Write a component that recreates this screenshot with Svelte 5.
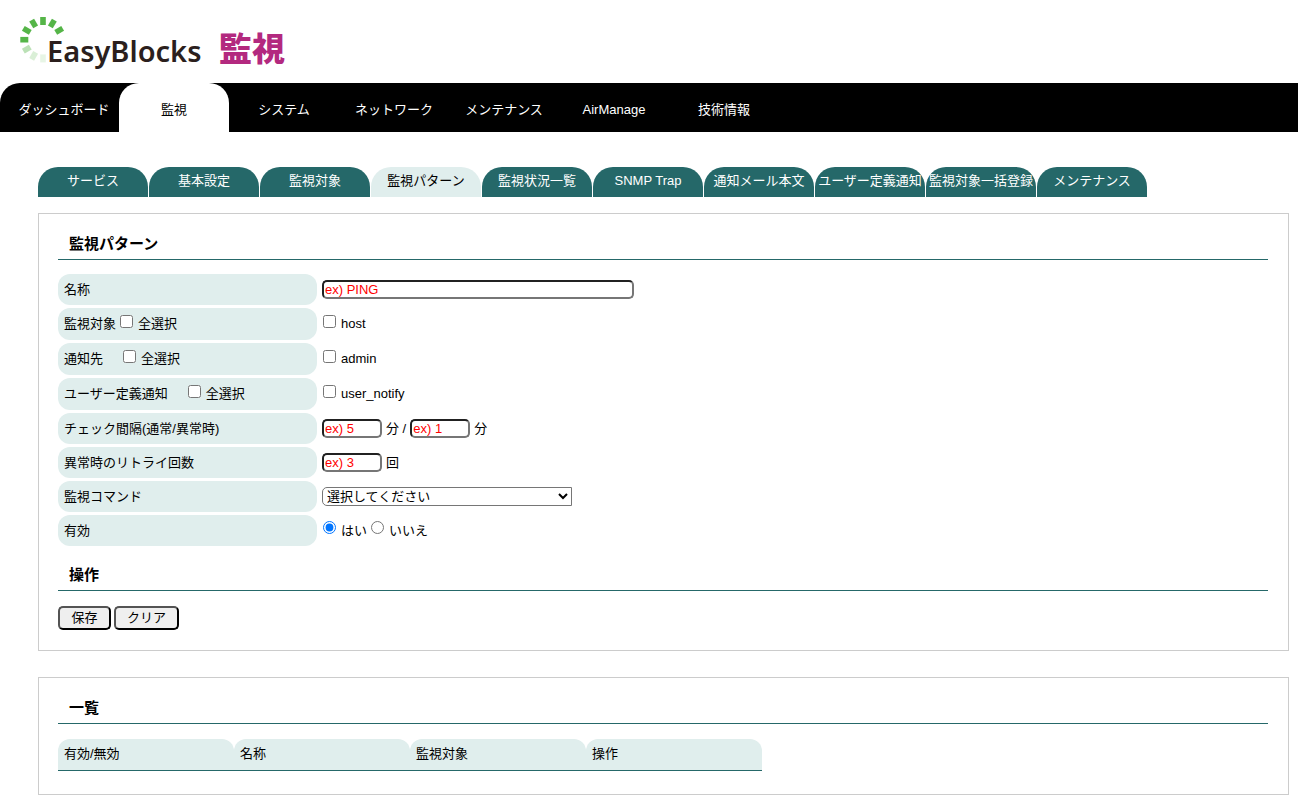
<script>
    const menu = ["ダッシュボード", "監視", "システム", "ネットワーク", "メンテナンス", "AirManage", "技術情報"];
    const tabs = [
        "サービス",
        "基本設定",
        "監視対象",
        "監視パターン",
        "監視状況一覧",
        "SNMP Trap",
        "通知メール本文",
        "ユーザー定義通知",
        "監視対象一括登録",
        "メンテナンス",
    ];
    const choices = [
        { id: "target", title: "監視対象", item: "host" },
        { id: "notice", title: "通知先", item: "admin", spaced: true },
        { id: "user", title: "ユーザー定義通知", item: "user_notify", spaced: true },
    ];
    const columns = ["有効/無効", "名称", "監視対象", "操作"];

    // logo ring: twelve steps to the circle, the last ones fade out
    const blocks = [
        { step: 2, opacity: 1 },
        { step: 1, opacity: 1 },
        { step: 0, opacity: 1 },
        { step: -1, opacity: 1 },
        { step: -2, opacity: 1 },
        { step: -3, opacity: 1 },
        { step: -4, opacity: 0.4 },
        { step: -5, opacity: 0.22 },
        { step: -6, opacity: 0.14 },
    ];

    let activeMenu = "監視";
    let activeTab = "監視パターン";
    let enabled = "yes";
</script>

<header>
    <svg class="logo" width="300" height="83" viewBox="0 0 300 83" role="img" aria-label="EasyBlocks 監視">
        {#each blocks as { step, opacity }}
            <rect x="40.2" y="17" width="5.6" height="8" fill="#55b548" {opacity} transform="rotate({step * 30} 43 39.7)" />
        {/each}
        <text class="brand" x="47" y="62">EasyBlocks</text>
        <text class="product" x="219" y="61">監視</text>
    </svg>
    <nav class="menu">
        {#each menu as name}
            <a href="#menu" class:active={name === activeMenu} on:click|preventDefault={() => (activeMenu = name)}>{name}</a>
        {/each}
    </nav>
</header>

<main>
    <nav class="tabs">
        {#each tabs as name}
            <a href="#tab" class:active={name === activeTab} on:click|preventDefault={() => (activeTab = name)}>{name}</a>
        {/each}
    </nav>

    <form class="panel" on:submit|preventDefault>
        <h3>監視パターン</h3>
        <div class="rows">
            <div class="row">
                <div class="title"><label for="name">名称</label></div>
                <div class="field"><input id="name" class="long" type="text" placeholder="ex) PING" /></div>
            </div>
            {#each choices as { id, title, item, spaced }}
                <div class="row choice">
                    <div class="title">
                        <span class:spaced>{title}</span>
                        <input id="{id}-all" type="checkbox" /><label for="{id}-all">全選択</label>
                    </div>
                    <div class="field"><input id="{id}-item" type="checkbox" /><label for="{id}-item">{item}</label></div>
                </div>
            {/each}
            <div class="row">
                <div class="title"><label for="interval">チェック間隔(通常/異常時)</label></div>
                <div class="field">
                    <input id="interval" type="text" placeholder="ex) 5" /><span class="unit">分 /</span>
                    <input type="text" placeholder="ex) 1" aria-label="異常時" /><span class="unit">分</span>
                </div>
            </div>
            <div class="row">
                <div class="title"><label for="retry">異常時のリトライ回数</label></div>
                <div class="field"><input id="retry" type="text" placeholder="ex) 3" /><span class="unit">回</span></div>
            </div>
            <div class="row">
                <div class="title"><label for="command">監視コマンド</label></div>
                <div class="field">
                    <select id="command"><option>選択してください</option></select>
                </div>
            </div>
            <div class="row">
                <div class="title">有効</div>
                <div class="field">
                    <input id="yes" type="radio" value="yes" bind:group={enabled} /><label for="yes">はい</label>
                    <input id="no" type="radio" value="no" bind:group={enabled} /><label for="no">いいえ</label>
                </div>
            </div>
        </div>

        <h3>操作</h3>
        <div class="buttons">
            <button type="submit">保存</button>
            <button type="reset">クリア</button>
        </div>
    </form>

    <section class="panel">
        <h3>一覧</h3>
        <table>
            <thead>
                <tr>
                    {#each columns as column}
                        <th>{column}</th>
                    {/each}
                </tr>
            </thead>
        </table>
    </section>
</main>

<style>
    :global(body) {
        margin: 0;
        background: #fff;
        color: #000;
        font: 13px/20px "Liberation Sans", Arial, "Noto Sans CJK JP", sans-serif;
    }
    .logo {
        display: block;
    }
    .brand {
        font: 600 29px "Noto Sans", sans-serif;
        fill: #2b1f1d;
    }
    .product {
        font: 900 33px "Noto Sans CJK JP", sans-serif;
        fill: #b3297f;
    }
    nav {
        display: flex;
    }
    nav a {
        box-sizing: border-box;
        flex: 0 0 110px;
        text-align: center;
        white-space: nowrap;
        text-decoration: none;
        color: #fff;
    }
    .menu {
        height: 49px;
        padding-left: 9px;
        background: #000;
        border-top-left-radius: 20px;
    }
    .menu a {
        padding-top: 17px;
        border-radius: 20px 20px 0 0;
    }
    .menu a.active {
        background: #fff;
        color: #000;
    }
    main {
        padding: 35px 9px 10px 38px;
    }
    .tabs {
        gap: 1px;
        margin-bottom: 16px;
    }
    .tabs a {
        height: 30px;
        padding-top: 4px;
        border-radius: 20px 20px 0 0;
        background: #256869;
    }
    .tabs a.active {
        background: #e0eeed;
        color: #000;
    }
    .panel {
        padding: 19px 20px 20px 19px;
        border: 1px solid #ccc;
    }
    .panel + .panel {
        margin-top: 26px;
        padding-bottom: 23px;
    }
    h3 {
        margin: 0 0 14px;
        padding: 1px 11px 5px;
        border-bottom: 1px solid #256869;
        font-size: 15px;
        line-height: 20px;
    }
    .rows {
        display: flex;
        flex-direction: column;
        gap: 3px;
        margin-bottom: 18px;
    }
    .row {
        display: flex;
        gap: 5px;
        min-height: 31px;
    }
    .choice {
        min-height: 32px;
    }
    .title {
        flex: 0 0 259px;
        box-sizing: border-box;
        padding-left: 6px;
        border-radius: 12px;
        background: #e0eeed;
    }
    .title,
    .field {
        display: flex;
        align-items: center;
    }
    .spaced {
        margin-right: 16px;
    }
    input[type="checkbox"],
    input[type="radio"] {
        width: 13px;
        height: 13px;
        margin: 0 5px 6px 1px;
    }
    .title input[type="checkbox"] {
        margin-left: 4px;
    }
    label + input[type="radio"] {
        margin-left: 4px;
    }
    input[type="text"] {
        box-sizing: border-box;
        width: 60px;
        height: 19px;
        padding: 0 1px;
        border: 2px inset #767676;
        border-radius: 5px;
        font: inherit;
    }
    input[type="text"].long {
        width: 312px;
    }
    input::placeholder {
        color: #f00;
        opacity: 1;
    }
    .unit {
        margin: 0 4px;
    }
    select {
        width: 250px;
        height: 19px;
        padding: 0;
        border: 1px solid #767676;
        border-radius: 5px 0 0 5px;
        background: #fff;
        color: #000;
        font: inherit;
    }
    .buttons {
        display: flex;
        gap: 3px;
        padding-top: 1px;
    }
    button {
        min-width: 53px;
        height: 24px;
        padding: 0 11px;
        border: 2px outset #000;
        border-radius: 5px;
        background: #efefef;
        color: #000;
        font: inherit;
        line-height: 18px;
    }
    table {
        border-spacing: 0;
        table-layout: fixed;
        width: 704px;
        margin-top: 15px;
    }
    th {
        box-sizing: border-box;
        height: 32px;
        padding: 0 6px 2px;
        border-bottom: 1px solid #256869;
        border-radius: 12px 12px 0 0;
        background: #e0eeed;
        font-weight: normal;
        text-align: left;
    }
</style>
